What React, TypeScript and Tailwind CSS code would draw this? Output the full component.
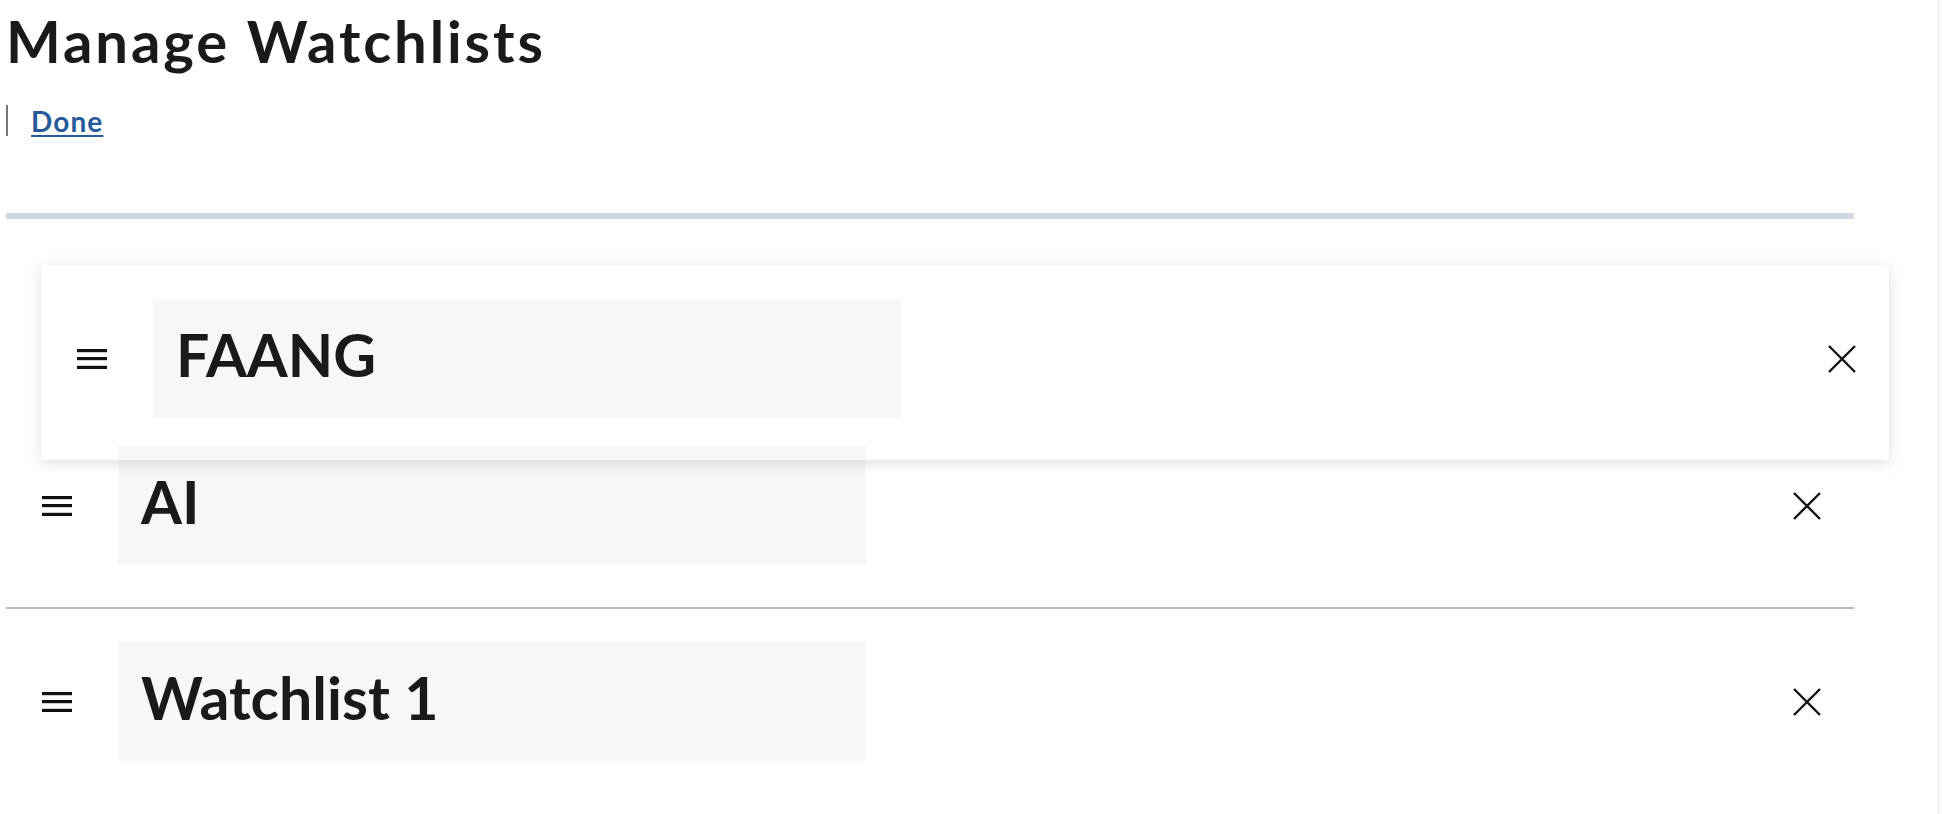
import React from "react";

const lists = ["AI", "Watchlist 1"];

function Grip() {
  return (
    <svg width="30" height="20" viewBox="0 0 30 20" className="shrink-0">
      <rect x="0" y="0" width="30" height="3.2" fill="#111" />
      <rect x="0" y="8" width="30" height="3.2" fill="#111" />
      <rect x="0" y="16.8" width="30" height="3.2" fill="#111" />
    </svg>
  );
}

function CloseIcon() {
  return (
    <svg width="28" height="28" viewBox="0 0 28 28" className="shrink-0">
      <path d="M1 1 L27 27 M27 1 L1 27" stroke="#111" strokeWidth="2.4" fill="none" />
    </svg>
  );
}

function Row({ name, className = "" }: { name: string; className?: string }) {
  return (
    <div className={`relative flex items-center pl-[36px] pr-[33px] ${className}`}>
      <Grip />
      <div className="ml-[46px] flex h-[119px] w-[748px] items-center bg-black/[0.03] pb-[8px] pl-[23px] text-[59px] leading-none font-bold text-[#1a1a1a]">
        {name}
      </div>
      <div className="flex-1" />
      <CloseIcon />
    </div>
  );
}

export default function App() {
  return (
    <div className="flex min-h-screen bg-white font-['Lato','Liberation_Sans',sans-serif] text-[#1a1a1a]">
      <div className="flex-1 pl-[6px]">
        <h1 className="mt-[12px] text-[58px] leading-[57px] font-bold tracking-[0.05em]">Manage Watchlists</h1>

        <div className="mt-[36px] flex h-[31px] items-center border-l-2 border-[#767676] pl-[23px]">
          <a href="#" className="text-[28px] leading-none font-bold tracking-[0.04em] text-[#255a9b] underline decoration-2 underline-offset-[3px]">
            Done
          </a>
        </div>

        <div className="mt-[77px] h-[6px] w-[1848px] bg-[#d1d9e3]" />

        <div className="relative w-[1848px]">
          {/* lifted item while dragging */}
          <div className="absolute left-[35px] top-[46px] h-[195px] w-[1848px] bg-white pt-[34px] shadow-[0_3px_14px_rgba(60,75,120,0.18)]">
            <Row name="FAANG" />
          </div>

          {/* empty slot left by the dragged row */}
          <div className="h-[194px]" />

          <Row name={lists[0]} className="border-b-2 border-[#b9b9b9] pt-[33px] pb-[42px]" />
          <Row name={lists[1]} className="pt-[33px] pb-[42px]" />
        </div>
      </div>
      <div className="w-[4px] border-l border-[#e9e9e9] bg-[#fafafa]" />
    </div>
  );
}
